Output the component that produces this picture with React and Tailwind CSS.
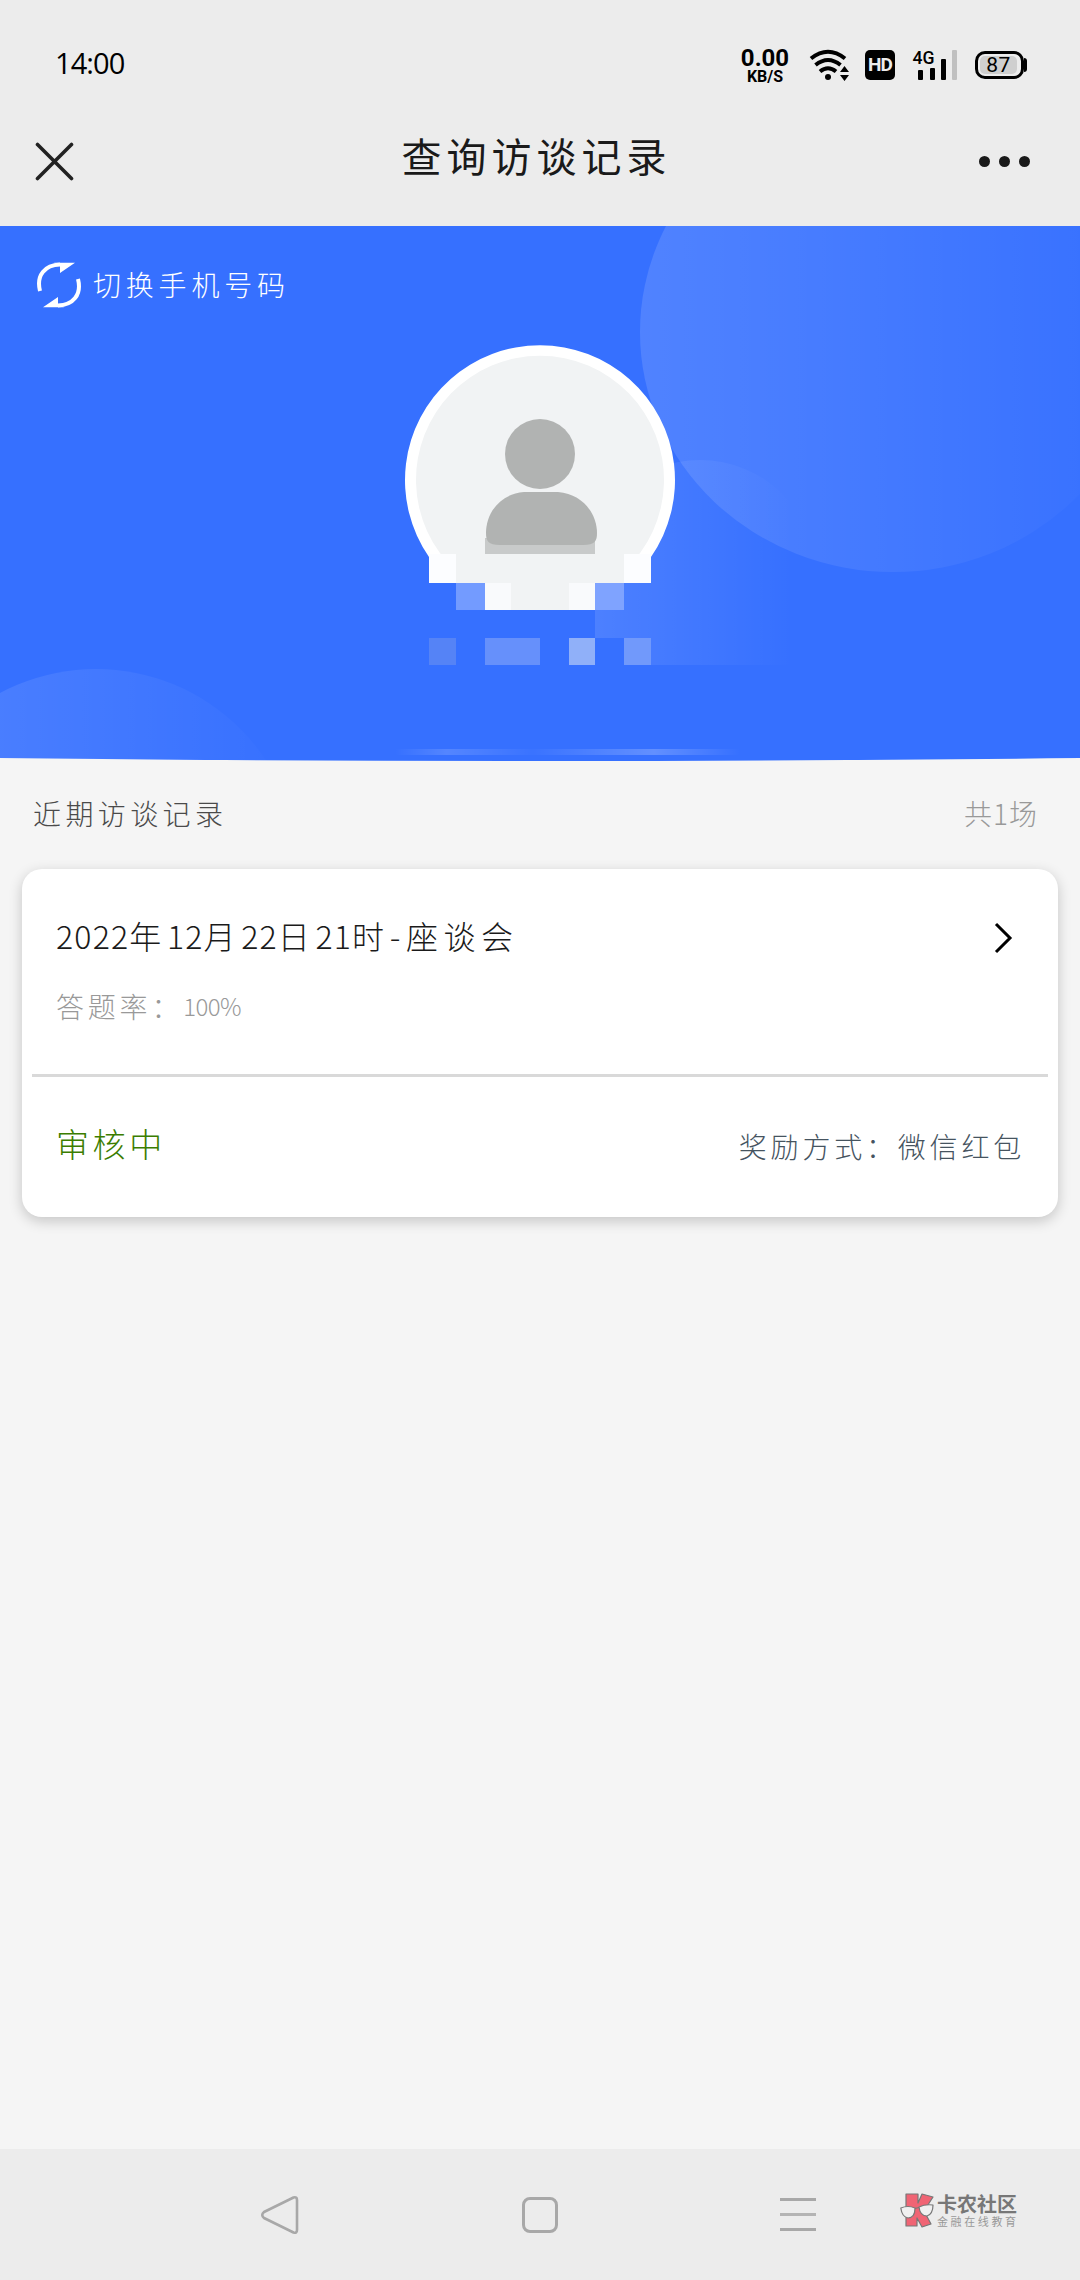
import React from 'react';

const RECORDS = [
    {
        id: 1,
        title: '2022年12月22日21时-座谈会',
        rate: '100%',
        status: '审核中',
        reward: '微信红包',
    },
];

// Mosaic cells over the lower part of the avatar and the phone number
const CELLS = [
    { x: 429, y: 328, w: 27, h: 29, fill: '#fcfdff' },
    { x: 624, y: 328, w: 27, h: 29, fill: '#fcfdff' },
    { x: 456, y: 328, w: 168, h: 29, fill: '#f1f3f4' },
    { x: 456, y: 357, w: 29, h: 27, fill: '#739bff' },
    { x: 485, y: 357, w: 26, h: 27, fill: '#f9fafc' },
    { x: 511, y: 357, w: 58, h: 27, fill: '#f1f3f4' },
    { x: 569, y: 357, w: 26, h: 27, fill: '#f9fafc' },
    { x: 595, y: 357, w: 29, h: 27, fill: '#7fa3ff' },
    { x: 429, y: 412, w: 27, h: 27, fill: '#5583f6' },
    { x: 485, y: 412, w: 55, h: 27, fill: '#6690fb' },
    { x: 569, y: 412, w: 26, h: 27, fill: '#90b0f9' },
    { x: 624, y: 412, w: 27, h: 27, fill: '#7199fb' },
];

export default function App() {
    return (
        <div className="flex flex-col w-[1080px] h-[2280px] overflow-hidden bg-[#f5f5f5] font-['Noto_Sans_CJK_SC',sans-serif]">
            <header className="h-[226px] shrink-0 bg-[#ececec]">
                <StatusBar />
                <TitleBar />
            </header>
            <Banner />

            <main className="flex-1">
                <div className="flex justify-between items-start h-[111px] pt-[35px] pl-[33px] pr-[42px] leading-10 font-light">
                    <h2 className="text-[28px] tracking-[4.400px] text-[#4a4a4a]">近期访谈记录</h2>
                    <span className="text-[28px] tracking-[1px] text-[#999]">共1场</span>
                </div>
                {RECORDS.map((r) => (
                    <RecordCard key={r.id} record={r} />
                ))}
            </main>

            <NavBar />
        </div>
    );
}

function StatusBar() {
    return (
        <div className="flex items-center h-[130px] pl-[55px] pr-[53px] text-black">
            <span className="text-[29px] leading-8 -mt-1 font-['Open_Sans',sans-serif] tracking-[-0.9px]">
                14:00
            </span>
            <div className="flex flex-col items-center w-[50px] ml-auto font-['Roboto',sans-serif] font-bold">
                <span className="text-[24px] leading-[24px]">0.00</span>
                <span className="-mt-[1px] text-[16px] leading-[16px]">KB/S</span>
            </div>
            <svg className="ml-[19px] w-[42px] h-[32px]" viewBox="0 0 42 32" fill="none" stroke="#000" strokeWidth="4">
                <path d="M2 9.5 Q19 -4 36 9.5" />
                <path d="M6.5 16 Q19 6 31.5 16" />
                <path d="M11 22.5 Q19 16 27 22.5" />
                <circle cx="19" cy="28" r="3" fill="#000" stroke="none" />
                <path d="M31 23 L35.500 17 L40 23 Z M31 26 L35.500 32 L40 26 Z" fill="#000" stroke="none" />
            </svg>
            <div className="flex items-center justify-center ml-[14px] w-[30px] h-[30px] rounded-[5px] bg-black text-[#ececec] text-[19px] font-bold font-['Roboto',sans-serif] tracking-[-0.8px]">
                HD
            </div>
            <svg className="ml-[17px] w-[46px] h-[34px] -mt-1" viewBox="0 -4 46 34">
                <text
                    x="0.500"
                    y="14"
                    fontSize="19"
                    fontFamily="Roboto"
                    fontWeight="500"
                    textLength="22"
                    lengthAdjust="spacingAndGlyphs"
                >
                    4G
                </text>
                <rect x="6" y="20" width="5" height="10" rx="1" />
                <rect x="18" y="18" width="5" height="12" rx="1" />
                <rect x="29" y="9" width="5" height="21" rx="1" />
                <rect x="40" y="0" width="5" height="30" rx="1" fill="#c0c0c0" />
            </svg>
            <div className="flex items-center ml-[17px]">
                <div className="flex items-center w-[49px] h-[28px] rounded-[10px] border-[3px] border-black p-[2px]">
                    <span className="flex items-center justify-center w-[37px] h-full rounded-[5px] bg-[#cfcfcf] text-[21px] leading-[20px] font-['Roboto',sans-serif] tracking-[0.5px]">
                        87
                    </span>
                </div>
                <span className="w-[3px] h-[14px] rounded-r-[3px] bg-black" />
            </div>
        </div>
    );
}

function TitleBar() {
    return (
        <div className="flex items-center justify-between h-[62px] pl-[35px] pr-[50px]">
            <svg className="w-[39px] h-[39px]" viewBox="0 0 39 39" stroke="#222" strokeWidth="3.6" strokeLinecap="round">
                <path d="M2.500 2.500 L36.500 36.500 M36.500 2.500 L2.500 36.500" />
            </svg>
            <h1 className="-mt-[12px] ml-[20px] text-[40px] leading-[56px] tracking-[5px] text-[#1a1a1a]">
                查询访谈记录
            </h1>
            <div className="flex gap-[9px]">
                <Dot />
                <Dot />
                <Dot />
            </div>
        </div>
    );
}

const Dot = () => <span className="w-[11px] h-[11px] rounded-full bg-[#1a1a1a]" />;

function Banner() {
    return (
        <section className="relative h-[532px] shrink-0">
            <svg className="absolute top-0 left-0 w-[1080px] h-[537px]" viewBox="0 0 1080 537">
                <defs>
                    <linearGradient id="fade">
                        <stop offset="0" stopColor="#fff" stopOpacity="0.13" />
                        <stop offset="1" stopColor="#fff" stopOpacity="0" />
                    </linearGradient>
                    <linearGradient id="fadeSmall">
                        <stop offset="0" stopColor="#fff" stopOpacity="0.12" />
                        <stop offset="0.9" stopColor="#fff" stopOpacity="0" />
                    </linearGradient>
                    <linearGradient id="shine">
                        <stop offset="0" stopColor="#fff" stopOpacity="0" />
                        <stop offset="0.15" stopColor="#fff" stopOpacity="0.15" />
                        <stop offset="0.4" stopColor="#fff" stopOpacity="0.02" />
                        <stop offset="0.75" stopColor="#fff" stopOpacity="0.22" />
                        <stop offset="1" stopColor="#fff" stopOpacity="0" />
                    </linearGradient>
                    <clipPath id="frame">
                        <path d="M0 0 H1080 V532 Q540 538 0 532 Z" />
                    </clipPath>
                    <clipPath id="upper">
                        <path d="M595 0 H1080 V439 H651 V412 H595 Z" />
                    </clipPath>
                </defs>
                <g clipPath="url(#frame)">
                    <rect width="1080" height="537" fill="#3670ff" />
                    <ellipse cx="893" cy="106" rx="253" ry="240" fill="url(#fade)" />
                    <path
                        d="M595 384 V412 H651 V439 H800 Q817 400 817 351 A117 117 0 0 0 583 351 Z"
                        fill="url(#fadeSmall)"
                        clipPath="url(#upper)"
                    />
                    <circle cx="96" cy="647" r="204" fill="url(#fade)" />
                    <rect x="395" y="523" width="345" height="6" fill="url(#shine)" />
                </g>

                <path d="M429 331 A135 135 0 1 1 651 331 V357 H429 Z" fill="#fff" />
                <path d="M456 345 A124 124 0 1 1 624 345 Z" fill="#f1f3f4" />
                {CELLS.map((c) => (
                    <rect key={`${c.x}-${c.y}`} x={c.x} y={c.y} width={c.w} height={c.h} fill={c.fill} />
                ))}
                <circle cx="540" cy="228" r="35" fill="#b1b3b2" />
                <rect x="485" y="312" width="110" height="16" fill="#c8caca" />
                <path
                    d="M524 266 H558 C583 268 597 288 597 307 C597 315 595 319 583 319 H500 C488 319 486 315 486 307 C486 288 499 268 524 266 Z"
                    fill="#b1b3b2"
                />
            </svg>

            <button className="relative flex items-center pt-9 pl-9 text-white">
                <svg className="w-[46px] h-[46px]" viewBox="0 0 46 46" fill="none" stroke="#fff" strokeWidth="4">
                    <path d="M4 29 C0 13 9 3 24 2.500" />
                    <path d="M42 17 C46 33 37 43 22 43.500" />
                    <path d="M18 0.700 H39 L24 11 V4 Z M28 45.300 H7 L22 35 V42 Z" fill="#fff" stroke="none" />
                </svg>
                <span className="ml-[11px] -mt-[2px] text-[28px] leading-10 font-light tracking-[4.800px]">
                    切换手机号码
                </span>
            </button>
        </section>
    );
}

function RecordCard({ record }) {
    // Digits run tighter than the Chinese characters around them
    const parts = record.title.split(/(\d+)/).filter(Boolean);
    return (
        <article className="mx-[22px] h-[348px] rounded-[20px] bg-white shadow-[0_4px_14px_rgba(0,0,0,0.2)] font-light">
            <div className="h-[208px] mx-[10px] pt-[42px] pl-[24px] pr-[35px] border-b-[3px] border-[#d9d9d9]">
                <div className="flex items-center justify-between">
                    <h3 className="text-[32px] leading-[48px] text-[#1a1a1a]">
                        {parts.map((p, i) => (
                            <span key={i} className={/\d/.test(p) ? 'tracking-[1.200px]' : 'tracking-[5.600px]'}>
                                {p}
                            </span>
                        ))}
                    </h3>
                    <svg className="mt-[5px] w-[19px] h-[32px]" viewBox="0 0 19 32" fill="none" stroke="#000" strokeWidth="3">
                        <path d="M2 2 L16 16 L2 30" />
                    </svg>
                </div>
                <p className="flex mt-[27px] text-[28px] leading-[40px] text-[#999]">
                    <span className="tracking-[3.800px]">答题率：</span>
                    <span className="text-[24px] tracking-[-0.600px]">{record.rate}</span>
                </p>
            </div>
            <div className="flex items-center justify-between h-[138px] pl-[34px] pr-[33px]">
                <span className="-mt-[4px] text-[33px] tracking-[3.600px] text-[#3b7d00]">{record.status}</span>
                <span className="text-[28px] tracking-[3.800px] text-[#46545f]">奖励方式：{record.reward}</span>
            </div>
        </article>
    );
}

function NavBar() {
    return (
        <nav className="flex items-center h-[131px] shrink-0 pl-[260px] bg-[#ececec]">
            <svg className="w-[39px] h-[40px]" viewBox="0 0 39 40" fill="none" stroke="#a8a8a8" strokeWidth="2.6" strokeLinejoin="round">
                <path d="M33.500 2.500 L4 17 Q0.500 20 4 23 L33.500 37.500 Q37 38.500 37 35 V5 Q37 1.500 33.500 2.500 Z" />
            </svg>
            <span className="ml-[223px] w-[36px] h-[36px] rounded-[8px] border-[3px] border-[#a8a8a8]" />
            <div className="flex flex-col justify-between ml-[222px] w-[36px] h-[33px]">
                <span className="h-[3px] bg-[#a8a8a8]" />
                <span className="h-[3px] bg-[#b4b4b4]" />
                <span className="h-[3px] bg-[#a8a8a8]" />
            </div>
            <Watermark />
        </nav>
    );
}

function Watermark() {
    return (
        <div className="flex items-center ml-[84px] -mt-2">
            <svg className="w-[34px] h-[35px]" viewBox="0 0 34 35" stroke="#777" strokeWidth="1.2" strokeLinejoin="round">
                <path d="M6 1 H18 V10 L22 1 L33 4 L24 18 L31 31 L22 34 L17 25 V33 H6 Z" fill="#f06474" />
                <path d="M0.800 15 Q8 12 15 15 Q15 25 8 25 Q2 24 0.800 15 Z" fill="#f0f0f0" />
                <path d="M19 14 Q25 11 33 12 Q33 21 27 23 Q20 23 19 14 Z" fill="#f0f0f0" />
                <path d="M15 15.500 L19 14.500" fill="none" />
            </svg>
            <div className="flex flex-col ml-[3px]">
                <span className="text-[20px] leading-[22px] font-bold text-[#777]">卡农社区</span>
                <span className="text-[11px] leading-[13px] tracking-[2.600px] text-[#999]">金融在线教育</span>
            </div>
        </div>
    );
}
